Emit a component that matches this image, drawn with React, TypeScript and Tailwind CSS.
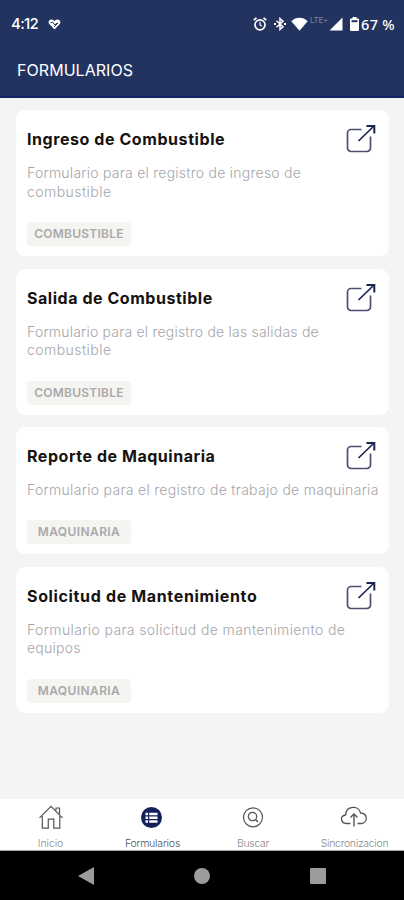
import React from "react";

type Form = {
  title: string;
  titleClass: string;
  lines: { text: string; className: string }[];
  tag: string;
  tagClass: string;
  height: string;
};

const forms: Form[] = [
  {
    title: "Ingreso de Combustible",
    titleClass: "tracking-[0.57px]",
    lines: [
      { text: "Formulario para el registro de ingreso de", className: "tracking-[0.25px]" },
      { text: "combustible", className: "tracking-[0.45px]" },
    ],
    tag: "COMBUSTIBLE",
    tagClass: "tracking-[0.25px]",
    height: "h-[146px]",
  },
  {
    title: "Salida de Combustible",
    titleClass: "tracking-[0.54px]",
    lines: [
      { text: "Formulario para el registro de las salidas de", className: "tracking-[0.21px]" },
      { text: "combustible", className: "tracking-[0.45px]" },
    ],
    tag: "COMBUSTIBLE",
    tagClass: "tracking-[0.25px]",
    height: "h-[146px]",
  },
  {
    title: "Reporte de Maquinaria",
    titleClass: "tracking-[0.54px]",
    lines: [{ text: "Formulario para el registro de trabajo de maquinaria", className: "tracking-[0.3px]" }],
    tag: "MAQUINARIA",
    tagClass: "tracking-[0.4px]",
    height: "h-[127px]",
  },
  {
    title: "Solicitud de Mantenimiento",
    titleClass: "tracking-[0.65px]",
    lines: [
      { text: "Formulario para solicitud de mantenimiento de", className: "tracking-[0.38px]" },
      { text: "equipos", className: "tracking-[0.25px]" },
    ],
    tag: "MAQUINARIA",
    tagClass: "tracking-[0.4px]",
    height: "h-[146px]",
  },
];

function OpenIcon() {
  return (
    <svg className="mt-[14px] h-[30px] w-[30px] shrink-0" viewBox="0 0 30 30" fill="none" stroke="#1b2456">
      <path d="M15.5 5.5H5a3.5 3.5 0 0 0-3.5 3.5v15A3.5 3.5 0 0 0 5 27.500h16a3.500 3.500 0 0 0 3.500-3.500V12.500" stroke="#4b5074" strokeWidth="1.7" />
      <path d="M12.500 17 28 2" strokeWidth="1.7" />
      <path d="M20.500 2.100H28.300V9.500" strokeWidth="2" />
    </svg>
  );
}

function FormCard({ form }: { form: Form }) {
  return (
    <article className={`flex flex-col justify-between rounded-[9px] bg-white pb-[10px] pl-[11px] ${form.height}`}>
      <div>
        <div className="flex h-[53px] items-start justify-between pr-[13px]">
          <h2 className={`mt-[17px] whitespace-nowrap text-[16px] leading-6 font-bold text-[#15120f] ${form.titleClass}`}>{form.title}</h2>
          <OpenIcon />
        </div>
        {form.lines.map((l) => (
          <p key={l.text} className={`h-[18.500px] whitespace-nowrap text-[14px] leading-[20px] font-light text-[#a5a5aa] ${l.className}`}>
            {l.text}
          </p>
        ))}
      </div>
      <span className={`flex h-6 w-[104px] items-center justify-center rounded-[4px] bg-[#f4f4f1] text-[12px] font-semibold text-[#a9a9ab] ${form.tagClass}`}>
        {form.tag}
      </span>
    </article>
  );
}

function StatusBar() {
  return (
    <div className="flex h-12 items-center justify-between pr-[9px] pl-[11px] text-white">
      <div className="flex items-center gap-[10px]">
        <span className="text-[15px] leading-5 font-medium tracking-[-0.7px]">4:12</span>
        <svg className="h-[11px] w-[13px]" viewBox="0 0 13 11">
          <path d="M6.500 10.500 1.200 5C-.5 2.800 1.500.3 3.500.5c1.400 0 2.300.8 3 1.700C7.200 1.300 8.100.5 9.500.5c2 0 4 2.300 2.300 4.500Z" fill="#fff" />
          <path d="m2.500 4 2-1 2.500 3 2-2.200M6 8l4-4" fill="none" stroke="#22335f" strokeWidth="1" />
        </svg>
      </div>
      <div className="flex items-center">
        <svg className="h-[14px] w-[14px]" viewBox="0 0 14 14" fill="none" stroke="#fff" strokeWidth="1.700">
          <circle cx="7" cy="7.800" r="5" />
          <path d="M.8 3 3.500.8M13.200 3 10.500.8" />
          <path d="M7 4.800V8l2 1.300" strokeWidth="1.200" />
        </svg>
        <svg className="ml-[7px] h-[14px] w-[12px]" viewBox="0 0 12 14" fill="none" stroke="#fff" strokeWidth="1.500">
          <path d="m2.500 3.800 6.500 6L6 12.500v-11l3 2.700-6.500 6" />
          <path d="M0 7h2M10 7h2" strokeWidth="1.800" />
        </svg>
        <svg className="ml-[5px] h-[14px] w-[17px]" viewBox="0 0 17 14">
          <path d="M.3 4.200C5-.3 12-.3 16.700 4.200L8.500 13.800Z" fill="#fff" />
        </svg>
        <span className="ml-[2px] h-[17px] w-[17px] text-[8px] leading-[9px] tracking-[-0.3px] text-[#7986a5]">LTE+</span>
        <svg className="ml-[2px] h-[14px] w-[14px]" viewBox="0 0 13 14">
          <path d="M13 .5V13.500H0Z" fill="#fff" />
        </svg>
        <svg className="ml-[7px] h-[14px] w-[9px]" viewBox="0 0 9 14">
          <path d="M2.500 0h4v1.500H8q1 0 1 1V13q0 1-1 1H1q-1 0-1-1V2.500q0-1 1-1h1.500Z" fill="#fff" />
          <path d="M1.500 3.200h6v2h-6Z" fill="#22335f" />
        </svg>
        <span className="ml-[2px] text-[14.500px] leading-5 font-medium whitespace-nowrap tracking-[0.3px] font-['Noto_Sans',sans-serif]">67 %</span>
      </div>
    </div>
  );
}

function HomeIcon() {
  return (
    <svg className="h-[26px] w-[26px]" viewBox="0 0 26 26" fill="none" stroke="#555" strokeWidth="1.200">
      <path d="M1.500 13.800 13 2.300 24.500 13.800M4.300 12v12.200h6v-9h5.500v9h6V12M18 6.500V4h3.500v6" />
    </svg>
  );
}

function ListIcon() {
  return (
    <svg className="h-[26px] w-[26px]" viewBox="0 0 26 26">
      <circle cx="12.500" cy="13.500" r="10.500" fill="#14205a" />
      <path d="M6.500 8.700H9V11.200H6.500ZM10.200 8.700H18.500V11.200H10.200ZM6.500 12.500H9V15H6.500ZM10.200 12.500H18.500V15H10.200ZM6.500 16.300H9V18.800H6.500ZM10.200 16.300H18.500V18.800H10.200Z" fill="#fff" />
    </svg>
  );
}

function SearchIcon() {
  return (
    <svg className="h-[26px] w-[26px]" viewBox="0 0 26 26" fill="none" stroke="#555" strokeWidth="1.200">
      <circle cx="13" cy="13.300" r="9.500" />
      <circle cx="12.500" cy="12.500" r="4.200" />
      <path d="m15.500 15.500 2.500 2.500" strokeWidth="1.600" />
    </svg>
  );
}

function CloudIcon() {
  return (
    <svg className="h-[26px] w-[28px]" viewBox="0 0 28 26" fill="none" stroke="#555" strokeWidth="1.300">
      <path d="M10.500 19.500H6.500C.3 19.200-.3 11.500 5.600 11 6.200 1.500 18.800 1 20.500 9c7.500.2 7.500 10 1 10.500H17.500" />
      <path d="M14 22.500V10.500M10.500 13.500 14 10l3.500 3.500" strokeWidth="1.400" />
    </svg>
  );
}

const tabs = [
  { label: "Inicio", icon: <HomeIcon />, className: "text-[#8a8a8a] tracking-[-0.1px]" },
  { label: "Formularios", icon: <ListIcon />, className: "pl-[2px] text-[#555] tracking-[-0.2px]" },
  { label: "Buscar", icon: <SearchIcon />, className: "pl-[1px] text-[#8a8a8a] tracking-[-0.3px]" },
  { label: "Sincronizacion", icon: <CloudIcon />, className: "pl-[2px] text-[#8a8a8a] tracking-[-0.3px]" },
];

export default function App() {
  return (
    <div className="flex h-[900px] w-[404px] flex-col overflow-hidden bg-[#f4f4f5] font-['Inter',sans-serif]">
      <header className="h-[97.500px] shrink-0 border-b-2 border-[#102460] bg-[#22335f]">
        <StatusBar />
        <h1 className="mt-[10px] ml-[17px] text-[16px] leading-6 whitespace-nowrap text-white tracking-[0.05px]">FORMULARIOS</h1>
      </header>
      <main className="flex flex-1 flex-col gap-[12.500px] pt-[12.800px] pr-[15.500px] pl-4">
        {forms.map((f) => (
          <FormCard key={f.title} form={f} />
        ))}
      </main>
      <nav className="grid h-[52px] shrink-0 grid-cols-4 border-b border-[#aaa] bg-white">
        {tabs.map((t) => (
          <div key={t.label} className="flex flex-col items-center pt-[5px]">
            {t.icon}
            <span className={`mt-[7px] text-[10.500px] leading-[14px] font-light whitespace-nowrap ${t.className}`}>{t.label}</span>
          </div>
        ))}
      </nav>
      <div className="flex h-[49px] shrink-0 items-center justify-between bg-black pr-[78px] pl-[78px]">
        <svg className="h-[18px] w-[16px]" viewBox="0 0 16 18">
          <path d="M16 0V18L0 9Z" fill="#9c9c9c" />
        </svg>
        <div className="h-4 w-4 rounded-full bg-[#9c9c9c]" />
        <div className="h-4 w-4 rounded-[1px] bg-[#9c9c9c]" />
      </div>
    </div>
  );
}
